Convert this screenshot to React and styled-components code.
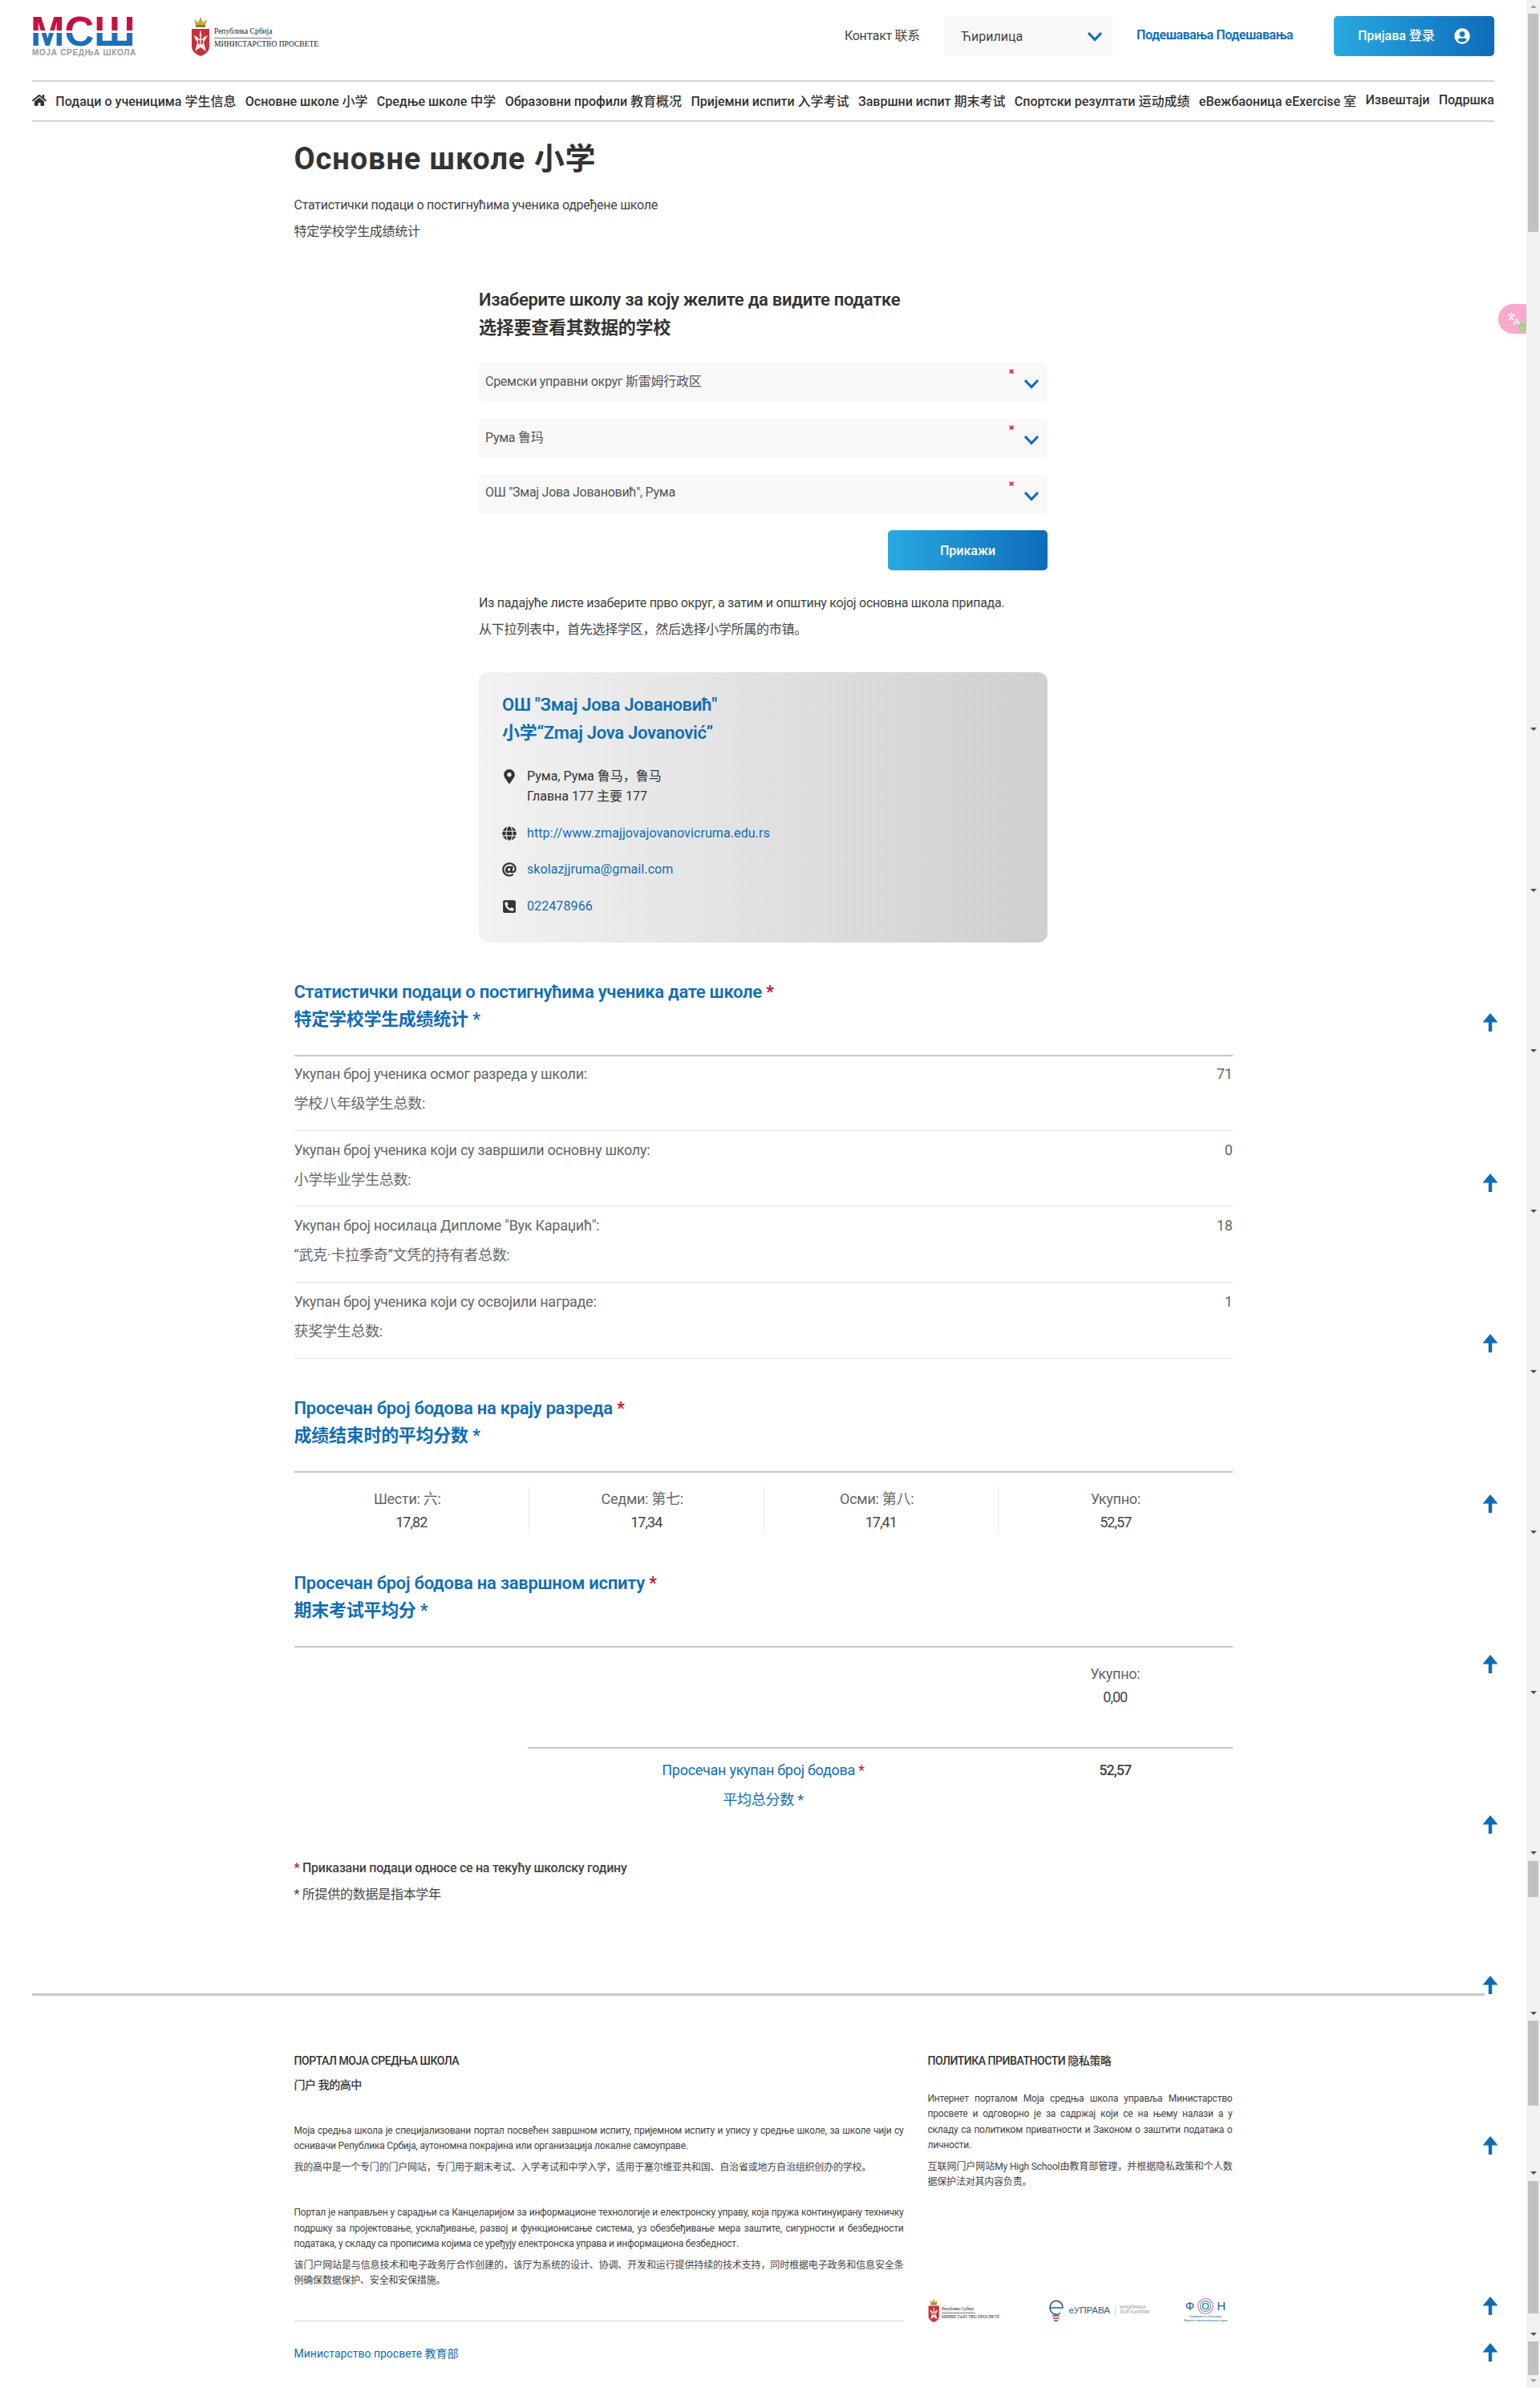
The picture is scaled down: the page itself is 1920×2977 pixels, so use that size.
import React from "react";
import styled, { createGlobalStyle } from "styled-components";
import { FaHome, FaMapMarkerAlt, FaGlobe, FaAt, FaPhoneSquareAlt, FaTimes, FaUserCircle, FaCheckCircle } from "react-icons/fa";
import { Languages } from "lucide-react";

const BLUE = "#0f6db8";
const SANS = `Roboto, "Noto Sans CJK SC", sans-serif`;

const Global = createGlobalStyle`
  html, body { margin: 0; padding: 0; background: #fff; }
  body { font-family: ${SANS}; color: #333; }
  * { box-sizing: border-box; }
  a { text-decoration: none; color: inherit; }
`;

const Screen = styled.div`
  position: relative;
  height: 2977px;
  overflow: hidden;
`;

const Page = styled.div`
  width: 1903px;
`;

// Header
const Header = styled.header`
  display: flex;
  justify-content: space-between;
  align-items: center;
  height: 100px;
  padding: 0 40px 10px;
`;

const Logos = styled.div`
  display: flex;
  align-items: center;
  gap: 68px;
`;

const MshMark = styled.div`
  width: 132px;
  height: 40px;
  margin-left: -2px;
  font-family: "Liberation Sans", sans-serif;
  font-size: 51px;
  font-weight: 700;
  line-height: 40px;
  white-space: nowrap;
  color: transparent;
  background: linear-gradient(180deg, #c8103e 0 18px, #fff 18px 21px, #1b6fbe 21px);
  -webkit-background-clip: text;
  background-clip: text;
`;

const MshCaption = styled.div`
  width: 130px;
  font-family: "Liberation Sans", sans-serif;
  font-size: 10px;
  font-weight: 700;
  line-height: 11px;
  letter-spacing: 0.7px;
  color: #9a9a9a;
  white-space: nowrap;
`;

const MinistryLogo = styled.div`
  display: flex;
  align-items: flex-end;
  gap: ${p => (p.$small ? 3 : 5)}px;
`;

const MinistryText = styled.div`
  font-family: "Liberation Serif", serif;
  font-size: ${p => (p.$small ? 5.3 : 9.5)}px;
  line-height: ${p => (p.$small ? 9 : 15)}px;
  color: #222;
  white-space: nowrap;
  padding-bottom: ${p => (p.$small ? 2 : 7)}px;
  span {
    display: block;
    border-bottom: 1px solid #777;
    width: ${p => (p.$small ? 42 : 72)}px;
  }
`;

const HeaderTools = styled.div`
  display: flex;
  align-items: center;
`;

const ContactLink = styled.a`
  font-size: 16px;
  letter-spacing: -0.3px;
  color: #444;
  margin-right: 30px;
  margin-top: -4px;
  white-space: nowrap;
`;

const LangSelect = styled.div`
  display: flex;
  justify-content: space-between;
  align-items: center;
  width: 210px;
  height: 50px;
  padding: 0 12px 0 21px;
  background: #f9f9f9;
  border-radius: 5px;
  font-size: 16px;
  color: #444;
  margin-right: 30px;
`;

const SettingsLink = styled.a`
  width: 196px;
  font-size: 16px;
  font-weight: 600;
  letter-spacing: -0.45px;
  color: ${BLUE};
  margin-right: 50px;
  margin-top: -4px;
  white-space: nowrap;
`;

const GradientButton = styled.button`
  display: flex;
  align-items: center;
  justify-content: ${p => (p.$wide ? "space-between" : "center")};
  width: ${p => (p.$wide ? 200 : 199)}px;
  height: 50px;
  padding: ${p => (p.$wide ? "0 30px" : "0")};
  border: 0;
  border-radius: 5px;
  background: linear-gradient(90deg, #29a9e1, #0e6cba);
  color: #fff;
  font-family: ${SANS};
  font-size: 16px;
  font-weight: 500;
`;

const LoginLabel = styled.span`
  margin-top: -4px;
`;

const Chevron = () => (
  <svg width="20" height="13" viewBox="0 0 20 13">
    <polyline points="2,2 10,10.5 18,2" fill="none" stroke={BLUE} strokeWidth="3.2" />
  </svg>
);

// Navigation
const Nav = styled.nav`
  display: flex;
  justify-content: space-between;
  align-items: center;
  height: 52px;
  margin: 0 40px;
  padding-bottom: 3px;
  border-top: 2px solid #d4d4d4;
  border-bottom: 2px solid #d4d4d4;
  font-size: 16px;
  font-weight: 500;
  color: #333;
  white-space: nowrap;
`;

// Main column
const Main = styled.main`
  width: 1170px;
  margin: 0 auto;
  padding-top: 21px;
  letter-spacing: -0.017em;
`;

const PageTitle = styled.h1`
  margin: 0;
  font-size: 38px;
  line-height: 50px;
  font-weight: 700;
  letter-spacing: 0.9px;
  color: #333;
`;

const Lead = styled.p`
  margin: 16px 0 0;
  font-size: 16px;
  line-height: 33px;
  color: #444;
`;

const FormBlock = styled.section`
  width: 709px;
  margin: 51px auto 0;
`;

const FormTitle = styled.h2`
  margin: 0;
  font-size: 22px;
  line-height: 35px;
  font-weight: 600;
  color: #333;
`;

const Fields = styled.div`
  display: flex;
  flex-direction: column;
  gap: 20px;
  margin: 25px 0 20px;
`;

const Field = styled.div`
  position: relative;
  display: flex;
  align-items: center;
  height: 50px;
  padding: 0 8px 5px;
  background: #f9f9f9;
  border-radius: 5px;
  font-size: 16px;
  color: #555;
`;

const Required = styled.span`
  position: absolute;
  top: 8px;
  right: 41px;
  color: #e3001b;
  font-size: 8px;
  line-height: 8px;
`;

const FieldChevron = styled.span`
  position: absolute;
  top: 21px;
  right: 10px;
  display: flex;
`;

const Actions = styled.div`
  display: flex;
  justify-content: flex-end;
`;

const Hint = styled.div`
  margin-top: 24px;
  font-size: 16px;
  line-height: 33px;
  color: #444;
`;

const SchoolCard = styled.section`
  height: 337px;
  margin-top: 37px;
  padding: 23px 29px;
  border-radius: 12px;
  background: linear-gradient(90deg, #f2f2f2, #cfcfcf);
`;

const SchoolName = styled.h3`
  margin: 0 0 24px;
  font-size: 22px;
  line-height: 35px;
  font-weight: 600;
  color: ${BLUE};
`;

const InfoRow = styled.div`
  display: flex;
  align-items: flex-start;
  gap: 13px;
  margin-bottom: 20.5px;
  font-size: 16px;
  line-height: 25px;
  letter-spacing: 0;
  color: #333;
  svg {
    flex: none;
    width: 18px;
    height: 18px;
    margin-top: 4px;
    color: #333;
  }
`;

const BlueLink = styled.a`
  letter-spacing: 0.1px;
  color: ${BLUE};
`;

const SectionTitle = styled.h3`
  margin: ${p => p.$top}px 0 ${p => p.$bottom}px;
  font-size: 22px;
  line-height: 34px;
  font-weight: 600;
  color: ${BLUE};
`;

const Star = styled.span`
  color: ${p => (p.$plain ? "inherit" : "#c8103e")};
`;

const Rule = styled.hr`
  margin: ${p => p.$top || 0}px 0 0 ${p => p.$indent || 0}px;
  border: 0;
  height: 2px;
  background: #c8c8c8;
`;

const CountRow = styled.div`
  display: flex;
  justify-content: space-between;
  padding: 5px 0 14.67px;
  border-bottom: 1px solid #e2e2e2;
  font-size: 18px;
  line-height: 37px;
  color: #666;
  &:first-of-type { margin-top: -2px; }
`;

const StatGrid = styled.div`
  display: grid;
  grid-template-columns: repeat(4, 1fr);
  margin-top: 18px;
`;

const StatCell = styled.div`
  grid-column: ${p => p.$col || "auto"};
  height: 58px;
  font-size: 18px;
  line-height: 29px;
  text-align: center;
  color: #666;
  border-left: ${p => (p.$divider ? "1px solid #e8e8e8" : "0")};
`;

const StatLabel = styled.div`
  padding-right: ${p => (p.$trail ? 10 : 0)}px;
`;

const StatValue = styled.div`
  letter-spacing: -1px;
  color: #444;
`;

const TotalGrid = styled.div`
  display: grid;
  grid-template-columns: repeat(4, 1fr);
  margin-top: 8px;
  font-size: 18px;
  line-height: 37px;
  text-align: center;
`;

const TotalLabel = styled.div`
  grid-column: 2 / 4;
  color: ${BLUE};
`;

const TotalValue = styled.div`
  font-weight: 500;
  letter-spacing: -1px;
  color: #444;
`;

const Footnotes = styled.div`
  margin-top: 50px;
  font-size: 16px;
  line-height: 33px;
  color: #444;
`;

const Strong = styled.div`
  font-weight: 500;
`;

// Footer
const PageRule = styled.hr`
  width: 1811px;
  height: 3px;
  margin: 107px 0 0 40px;
  border: 0;
  background: #c8c8c8;
`;

const Footer = styled.footer`
  display: grid;
  grid-template-columns: 760px 380px;
  column-gap: 30px;
  width: 1170px;
  margin: 0 auto;
  padding-top: 66px;
`;

const FooterHeading = styled.div`
  font-size: 14px;
  line-height: 30px;
  font-weight: 500;
  letter-spacing: -0.45px;
  color: #333;
`;

const FooterText = styled.p`
  margin: ${p => p.$top}px 0 0;
  font-size: 12px;
  line-height: 19.5px;
  letter-spacing: -0.017em;
  text-align: justify;
  color: #444;
`;

const FooterRule = styled.hr`
  height: 1px;
  margin: 39px 0 0;
  border: 0;
  background: #d4d4d4;
`;

const FooterLink = styled.a`
  display: block;
  margin-top: 28px;
  font-size: 14px;
  line-height: 24px;
  color: ${BLUE};
`;

const PartnerLogos = styled.div`
  display: flex;
  justify-content: space-between;
  align-items: center;
  height: 32px;
  margin-top: 133px;
`;

const Fon = styled.div`
  width: 67px;
  text-align: center;
`;

const FonMark = styled.div`
  display: flex;
  justify-content: center;
  align-items: center;
  gap: 3px;
  font-family: "Liberation Sans", sans-serif;
  font-size: 15px;
  line-height: 22px;
  color: #1c5f9e;
`;

const FonCaption = styled.div`
  font-size: 3.6px;
  line-height: 5px;
  color: #1c5f9e;
  white-space: nowrap;
`;

const EUprava = styled.div`
  display: flex;
  align-items: center;
  gap: 4px;
  margin-left: 24px;
`;

const EUpravaName = styled.span`
  font-family: "Liberation Sans", sans-serif;
  font-size: 11.5px;
  color: #27608f;
`;

const EUpravaSub = styled.span`
  margin-left: 2px;
  padding-left: 5px;
  border-left: 1px solid #cfd8e0;
  font-size: 4.5px;
  line-height: 6px;
  color: #8a8f94;
  white-space: nowrap;
`;

// Overlays
const UpArrow = styled.svg`
  position: absolute;
  left: 1848px;
  top: ${p => p.$y - 11}px;
  width: 20px;
  height: 23px;
`;

const ScrollRail = styled.div`
  position: absolute;
  top: 0;
  right: 0;
  width: 17px;
  height: 100%;
  background: #f1f1f1;
`;

const ScrollThumb = styled.div`
  position: absolute;
  left: 2px;
  width: 13px;
  top: ${p => p.$from}px;
  height: ${p => p.$to - p.$from}px;
  background: #c1c1c1;
`;

const ScrollButton = styled.div`
  position: absolute;
  left: 5px;
  top: ${p => p.$y - 2}px;
  border-left: 4px solid transparent;
  border-right: 4px solid transparent;
  ${p => (p.$up ? "border-bottom" : "border-top")}: 4px solid ${p => (p.$dim ? "#a3a3a3" : "#505050")};
`;

const TranslateBadge = styled.div`
  position: absolute;
  top: 379px;
  right: 17px;
  display: flex;
  align-items: center;
  justify-content: center;
  width: 35px;
  height: 37px;
  padding-left: 3px;
  background: #f9a9cb;
  border-radius: 19px 0 0 19px;
  color: #fff;
  box-shadow: 0 2px 8px rgba(0, 0, 0, 0.06);
`;

const BadgeCheck = styled.span`
  position: absolute;
  right: -1px;
  bottom: 3px;
  display: flex;
  color: #8fdc7d;
`;

const navItems = [
  "Подаци о ученицима 学生信息",
  "Основне школе 小学",
  "Средње школе 中学",
  "Образовни профили 教育概况",
  "Пријемни испити 入学考试",
  "Завршни испит 期末考试",
  "Спортски резултати 运动成绩",
  "еВежбаоница eExercise 室",
  "Извештаји",
  "Подршка",
];

const selects = ["Сремски управни округ 斯雷姆行政区", "Рума 鲁玛", `ОШ "Змај Јова Јовановић", Рума`];

const counts = [
  ["Укупан број ученика осмог разреда у школи:", "学校八年级学生总数:", "71"],
  ["Укупан број ученика који су завршили основну школу:", "小学毕业学生总数:", "0"],
  [`Укупан број носилаца Дипломе "Вук Караџић":`, `“武克·卡拉季奇”文凭的持有者总数:`, "18"],
  ["Укупан број ученика који су освојили награде:", "获奖学生总数:", "1"],
];

const grades = [
  ["Шести: 六:", "17,82"],
  ["Седми: 第七:", "17,34"],
  ["Осми: 第八:", "17,41"],
  ["Укупно:", "52,57"],
];

const arrowSpots = [1274, 1474, 1674, 1874, 2074, 2274, 2474, 2674, 2874, 2932];
const thumbs = [[17, 289], [2320, 2365], [2519, 2625], [2719, 2884], [2919, 2961]];
const railDowns = [909, 1110, 1310, 1510, 1710, 1910, 2110, 2310, 2510, 2709, 2910];

const Crest = ({ height }) => (
  <svg width={height * 0.48} height={height} viewBox="0 0 24 50">
    <path d="M6 12 L4 4 L9 8 L12 1 L15 8 L20 4 L18 12 Z" fill="#c9a63c" />
    <rect x="6" y="11" width="12" height="3" fill="#8d7a2e" />
    <path d="M1 16 H23 V38 Q23 46 12 50 Q1 46 1 38 Z" fill="#c8313a" />
    <path d="M12 17 L14 27 L21 24 L16 33 L19 44 L12 39 L5 44 L8 33 L3 24 L10 27 Z" fill="#f1ece4" />
    <path d="M9 25 H15 V34 Q12 37 9 34 Z" fill="#c8313a" />
    <path d="M11.2 25 H12.8 V36 H11.2 Z M9 28.5 H15 V30 H9 Z" fill="#f1ece4" />
  </svg>
);

const Ministry = ({ small }) => (
  <MinistryLogo $small={small}>
    <Crest height={small ? 30 : 50} />
    <MinistryText $small={small}>
      <span>Република Србија</span>
      МИНИСТАРСТВО ПРОСВЕТЕ
    </MinistryText>
  </MinistryLogo>
);

const Bulb = () => (
  <svg width="22" height="30" viewBox="0 0 22 30">
    <path d="M4 12 H19 A8 8.5 0 1 0 16 18.5" fill="none" stroke="#1c5f9e" strokeWidth="1.6" />
    <path d="M6 22 H15 M7 25 H14 M8 28 H13" stroke="#c8313a" strokeWidth="1.6" />
  </svg>
);

const FonRing = () => (
  <svg width="22" height="22" viewBox="0 0 22 22">
    <circle cx="11" cy="11" r="9.5" fill="none" stroke="#e9738d" strokeWidth="1.2" />
    <circle cx="11" cy="11" r="6.5" fill="none" stroke="#4fb0c6" strokeWidth="1.4" />
    <circle cx="11" cy="11" r="3.5" fill="none" stroke="#1c5f9e" strokeWidth="1.2" />
  </svg>
);

const App = () => (
  <Screen>
    <Global />
    <Page>
      <Header>
        <Logos>
          <div>
            <MshMark>МСШ</MshMark>
            <MshCaption>МОЈА СРЕДЊА ШКОЛА</MshCaption>
          </div>
          <Ministry />
        </Logos>
        <HeaderTools>
          <ContactLink>Контакт 联系</ContactLink>
          <LangSelect>
            Ћирилица
            <Chevron />
          </LangSelect>
          <SettingsLink>Подешавања Подешавања</SettingsLink>
          <GradientButton $wide>
            <LoginLabel>Пријава 登录</LoginLabel>
            <FaUserCircle size={20} />
          </GradientButton>
        </HeaderTools>
      </Header>

      <Nav>
        <FaHome size={18} />
        {navItems.map(item => (
          <a key={item}>{item}</a>
        ))}
      </Nav>

      <Main>
        <PageTitle>Основне школе 小学</PageTitle>
        <Lead>
          Статистички подаци о постигнућима ученика одређене школе
          <br />
          特定学校学生成绩统计
        </Lead>

        <FormBlock>
          <FormTitle>
            Изаберите школу за коју желите да видите податке
            <br />
            选择要查看其数据的学校
          </FormTitle>
          <Fields>
            {selects.map(value => (
              <Field key={value}>
                {value}
                <Required>
                  <FaTimes />
                </Required>
                <FieldChevron>
                  <Chevron />
                </FieldChevron>
              </Field>
            ))}
          </Fields>
          <Actions>
            <GradientButton>Прикажи</GradientButton>
          </Actions>
          <Hint>
            Из падајуће листе изаберите прво округ, а затим и општину којој основна школа припада.
            <br />
            从下拉列表中，首先选择学区，然后选择小学所属的市镇。
          </Hint>

          <SchoolCard>
            <SchoolName>
              ОШ "Змај Јова Јовановић"
              <br />
              小学“Zmaj Jova Jovanović”
            </SchoolName>
            <InfoRow>
              <FaMapMarkerAlt />
              <div>
                Рума, Рума 鲁马，鲁马
                <br />
                Главна 177 主要 177
              </div>
            </InfoRow>
            <InfoRow>
              <FaGlobe />
              <BlueLink>http://www.zmajjovajovanovicruma.edu.rs</BlueLink>
            </InfoRow>
            <InfoRow>
              <FaAt />
              <BlueLink>skolazjjruma@gmail.com</BlueLink>
            </InfoRow>
            <InfoRow>
              <FaPhoneSquareAlt />
              <BlueLink>022478966</BlueLink>
            </InfoRow>
          </SchoolCard>
        </FormBlock>

        <SectionTitle $top={45} $bottom={27}>
          Статистички подаци о постигнућима ученика дате школе <Star>*</Star>
          <br />
          特定学校学生成绩统计 <Star $plain>*</Star>
        </SectionTitle>
        <Rule />
        {counts.map(([sr, zh, value]) => (
          <CountRow key={sr}>
            <div>
              {sr}
              <br />
              {zh}
            </div>
            <div>{value}</div>
          </CountRow>
        ))}

        <SectionTitle $top={45} $bottom={27}>
          Просечан број бодова на крају разреда <Star>*</Star>
          <br />
          成绩结束时的平均分数 <Star $plain>*</Star>
        </SectionTitle>
        <Rule />
        <StatGrid>
          {grades.map(([label, value], i) => (
            <StatCell key={label} $divider={i > 0}>
              <StatLabel $trail={i < 3}>{label}</StatLabel>
              <StatValue>{value}</StatValue>
            </StatCell>
          ))}
        </StatGrid>

        <SectionTitle $top={45} $bottom={27}>
          Просечан број бодова на завршном испиту <Star>*</Star>
          <br />
          期末考试平均分 <Star $plain>*</Star>
        </SectionTitle>
        <Rule />
        <StatGrid>
          <StatCell $col="4">
            <StatLabel>Укупно:</StatLabel>
            <StatValue>0,00</StatValue>
          </StatCell>
        </StatGrid>
        <Rule $top={48} $indent={291} />
        <TotalGrid>
          <TotalLabel>
            Просечан укупан број бодова <Star>*</Star>
            <br />
            平均总分数 <Star $plain>*</Star>
          </TotalLabel>
          <TotalValue>52,57</TotalValue>
        </TotalGrid>

        <Footnotes>
          <Strong>
            <Star>*</Star> Приказани подаци односе се на текућу школску годину
          </Strong>
          * 所提供的数据是指本学年
        </Footnotes>
      </Main>

      <PageRule />

      <Footer>
        <div>
          <FooterHeading>
            ПОРТАЛ МОЈА СРЕДЊА ШКОЛА
            <br />
            门户 我的高中
          </FooterHeading>
          <FooterText $top={33}>
            Моја средња школа је специјализовани портал посвећен завршном испиту, пријемном испиту и упису у средње школе, за школе чији су оснивачи Република Србија, аутономна покрајина или организација локалне самоуправе.
          </FooterText>
          <FooterText $top={7}>我的高中是一个专门的门户网站，专门用于期末考试、入学考试和中学入学，适用于塞尔维亚共和国、自治省或地方自治组织创办的学校。</FooterText>
          <FooterText $top={37}>
            Портал је направљен у сарадњи са Канцеларијом за информационе технологије и електронску управу, која пружа континуирану техничку подршку за пројектовање, усклађивање, развој и функционисање система, уз обезбеђивање мера заштите, сигурности и безбедности података, у складу са прописима којима се уређују електронска управа и информациона безбедност.
          </FooterText>
          <FooterText $top={7}>该门户网站是与信息技术和电子政务厅合作创建的，该厅为系统的设计、协调、开发和运行提供持续的技术支持，同时根据电子政务和信息安全条例确保数据保护、安全和安保措施。</FooterText>
          <FooterRule />
          <FooterLink>Министарство просвете 教育部</FooterLink>
        </div>
        <div>
          <FooterHeading>ПОЛИТИКА ПРИВАТНОСТИ 隐私策略</FooterHeading>
          <FooterText $top={23}>
            Интернет порталом Моја средња школа управља Министарство просвете и одговорно је за садржај који се на њему налази а у складу са политиком приватности и Законом о заштити података о личности.
          </FooterText>
          <FooterText $top={7}>互联网门户网站My High School由教育部管理，并根据隐私政策和个人数据保护法对其内容负责。</FooterText>
          <PartnerLogos>
            <Ministry small />
            <EUprava>
              <Bulb />
              <EUpravaName>еУПРАВА</EUpravaName>
              <EUpravaSub>
                КАНЦЕЛАРИЈА
                <br />
                ЗА ИТ И еУПРАВУ
              </EUpravaSub>
            </EUprava>
            <Fon>
              <FonMark>
                Ф<FonRing />Н
              </FonMark>
              <FonCaption>Универзитет у Београду</FonCaption>
              <FonCaption>Факултет организационих наука</FonCaption>
            </Fon>
          </PartnerLogos>
        </div>
      </Footer>
    </Page>

    {arrowSpots.map(y => (
      <UpArrow key={y} $y={y} viewBox="0 0 20 23">
        <path d="M10 0 L19.5 11.5 H12.2 V23 H7.8 V11.5 H0.5 Z" fill={BLUE} />
      </UpArrow>
    ))}

    <TranslateBadge>
      <Languages size={17} />
      <BadgeCheck>
        <FaCheckCircle size={11} />
      </BadgeCheck>
    </TranslateBadge>

    <ScrollRail>
      {thumbs.map(([from, to]) => (
        <ScrollThumb key={from} $from={from} $to={to} />
      ))}
      <ScrollButton $up $dim $y={8} />
      {railDowns.map(y => (
        <ScrollButton key={y} $y={y} />
      ))}
      <ScrollButton $dim $y={2968} />
    </ScrollRail>
  </Screen>
);

export default App;
